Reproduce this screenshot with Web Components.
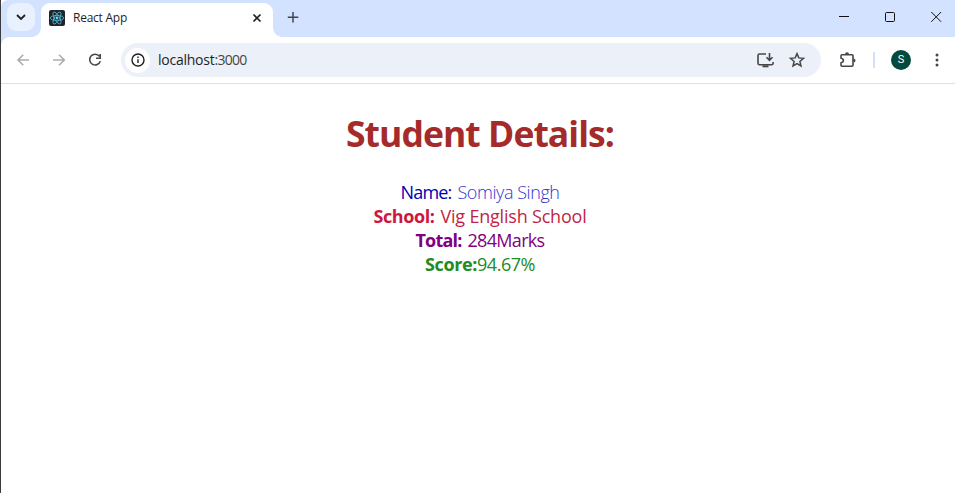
<!DOCTYPE html>
<html lang="en">
<head>
<meta charset="utf-8">
<title>React App</title>
<style>
html,body{margin:0;height:100%;overflow:hidden;background:#fff;font-family:"Open Sans","Noto Sans",sans-serif}
</style>
</head>
<body>
<browser-window>
  <tab-strip slot="tabs"></tab-strip>
  <tool-bar slot="toolbar"></tool-bar>
  <student-details></student-details>
</browser-window>
<script>
const define = (name, html, ready) => customElements.define(name, class extends HTMLElement {
  constructor() {
    super();
    const t = document.createElement('template');
    t.innerHTML = html.trim();
    this.attachShadow({ mode: 'open' }).append(t.content.cloneNode(true));
  }
  connectedCallback() { if (ready) ready(this); }
});

define('detail-row', `
<style>
:host{display:flex;height:24px;font-size:18px;line-height:24px}
::slotted([slot=label]){font-weight:700}
</style>
<slot name="label"></slot><slot></slot>`);

/* Inline text whose letter spacing is adjusted to fill the given width */
define('fit-text', `<style>:host{display:block;white-space:pre;flex:none}span{display:inline-block;vertical-align:top}</style><span><slot></slot></span>`, el => {
  const span = el.shadowRoot.querySelector('span');
  const w = +el.getAttribute('width');
  span.style.letterSpacing = '0px';
  const natural = span.getBoundingClientRect().width;
  span.style.letterSpacing = (w - natural) / el.textContent.length + 'px';
  el.style.width = w + 'px';
});

define('browser-window', `
<style>
:host{display:flex;flex-direction:column;height:100vh;box-sizing:border-box;border-left:1px solid #3c3c3f;background:#fff}
</style>
<slot name="tabs"></slot><slot name="toolbar"></slot><slot></slot>`);

define('tab-strip', `
<style>
:host{display:flex;height:37px;flex:none;background:#d3e2fe;color:#1f1f1f;border-radius:7px 0 0 0}
.search{width:28px;height:28px;margin:3px 6px 0;border-radius:9px;background:#e9f0fe;flex:none}
.tab{position:relative;display:flex;align-items:center;box-sizing:border-box;width:232px;height:34px;margin-top:3px;padding:0 8px 5px;border-radius:9px 9px 0 0;background:#fff;flex:none}
.tab::before,.tab::after{content:"";position:absolute;bottom:0;width:9px;height:9px}
.tab::before{right:100%;background:radial-gradient(circle at 0 0,transparent 8.5px,#fff 9px)}
.tab::after{left:100%;background:radial-gradient(circle at 100% 0,transparent 8.5px,#fff 9px)}
fit-text{font-size:12px;margin-left:8px;line-height:18px}
svg{display:block;flex:none}
.close{margin-left:auto}
.plus{margin:9px 0 0 12px}
.controls{display:flex;gap:30px;margin:9px 11px 0 auto}
</style>
<div class="search"><svg width="28" height="28" fill="none" stroke="#1f1f1f" stroke-width="1.8"><path d="M10 12l4 4 4-4"/></svg></div>
<div class="tab">
<svg width="16" height="16"><rect width="16" height="16" rx="2" fill="#20242b"/><g fill="none" stroke="#4fb6d1" stroke-width=".85"><ellipse cx="8" cy="8" rx="6.7" ry="2.6"/><ellipse cx="8" cy="8" rx="6.7" ry="2.6" transform="rotate(60 8 8)"/><ellipse cx="8" cy="8" rx="6.7" ry="2.6" transform="rotate(120 8 8)"/></g><circle cx="8" cy="8" r="1.4" fill="#61dafb"/></svg>
<fit-text width="54">React App</fit-text>
<svg class="close" width="16" height="16" stroke="#1f1f1f" stroke-width="1.7"><path d="M4.500 4.500l7 7m0-7l-7 7"/></svg>
</div>
<svg class="plus" width="16" height="16" stroke="#41454c" stroke-width="1.5"><path d="M8 3v10.500M2.800 8.200h10.500"/></svg>
<div class="controls">
<svg width="16" height="16" stroke="#111"><path d="M3 7.500h10"/></svg>
<svg width="16" height="16" stroke="#111" fill="none"><rect x="3.500" y="3.500" width="9" height="9" rx="1"/></svg>
<svg width="16" height="16" stroke="#111"><path d="M3.300 3l9.800 9.800m0-9.800l-9.800 9.800"/></svg>
</div>`);

define('tool-bar', `
<style>
:host{display:flex;align-items:center;height:46px;flex:none;border-bottom:1px solid #dfe0e2;background:#fff;color:#1f1f1f;padding-left:12px;position:relative}
:host::before{content:"";position:absolute;left:0;top:0;width:8px;height:8px;background:radial-gradient(circle at 100% 100%,transparent 7.5px,#d3e2fe 8px)}
svg{display:block;flex:none;fill:none;stroke:#474747;stroke-width:1.6}
.dim{stroke:#adadad}
.omni{display:flex;align-items:center;box-sizing:border-box;width:700px;height:34px;border-radius:17px;background:#ebf0f9;margin-left:17px;padding:0 13px 0 4px;flex:none}
.info{width:25px;height:25px;border-radius:50%;background:#fff;display:grid;place-items:center;flex:none}
.url{display:flex;margin:0 auto 0 8px;font-size:14px;line-height:20px}
.port{color:#474747}
.sep{width:2px;height:16px;background:#d3e0f5;margin:0 16px 0 17px}
.avatar{width:20px;height:20px;border-radius:50%;background:#03493d;color:#fff;font:11px/20px Roboto,sans-serif;text-align:center}
</style>
<svg class="dim" width="20" height="20"><path d="M16 10H5m5.300-5.300L5 10l5.300 5.300"/></svg>
<svg class="dim" style="margin-left:16px" width="20" height="20"><path d="M4 10h11.300m-5.300-5.300l5.300 5.300-5.300 5.300"/></svg>
<svg style="margin-left:17px" width="18" height="18"><path d="M13.400 5.300A5.400 5.400 0 1 0 14.300 10.100M14.200 3v4.200H10"/></svg>
<div class="omni">
<div class="info"><svg width="16" height="16" style="stroke:#1f1f1f;stroke-width:1.400"><circle cx="8" cy="8" r="6"/><path d="M8 7.200v3.900M8 4.600v1.500"/></svg></div>
<div class="url"><fit-text width="56.5">localhost</fit-text><fit-text class="port" width="32">:3000</fit-text></div>
<svg width="18" height="18"><path d="M10 3H3.600Q2 3 2 4.500v7.700q0 1.500 1.600 1.500h12q1.500 0 1.500-1.500V11M13.500 2v7M10.500 6.300l3 3 3-3"/><path d="M6.500 15.300h6" stroke-width="2"/></svg>
<svg style="margin-left:14px;margin-right:2px" width="18" height="18"><path d="M9 2.600l1.800 4.300 4.700.4-3.600 3.100 1.100 4.600L9 12.600 5 15l1.100-4.600-3.600-3.100 4.700-.4z" stroke-width="1.500"/></svg>
</div>
<svg style="margin-left:17px" width="18" height="18"><path d="M4 3.700h10q1 0 1 1v9.600q0 1-1 1H4q-1 0-1-1v-2.600q2.400-.5 2.400-2.200T3 7.300V4.700q0-1 1-1z" stroke-linejoin="round"/><path d="M7 3.300a2 2 0 0 1 4 0zM15.500 7.500a2 2 0 0 1 0 4z" fill="#474747" stroke="none"/></svg>
<div class="sep"></div>
<div class="avatar">S</div>
<svg style="margin-left:17px" width="18" height="18"><g fill="#474747" stroke="none"><circle cx="9" cy="4" r="1.500"/><circle cx="9" cy="9" r="1.500"/><circle cx="9" cy="14" r="1.500"/></g></svg>`);

define('student-details', `
<style>
:host{display:flex;flex-direction:column;align-items:center;padding:25px 0 0 4px}
h1{margin:0 0 23px;font-size:35.5px;line-height:48px;font-weight:700;color:#a52a2a}
</style>
<h1><fit-text width="268">Student Details:</fit-text></h1>
<detail-row style="color:#0000b8"><fit-text slot="label" style="font-weight:400" width="51">Name:</fit-text><fit-text style="font-weight:300;color:#3434cc;margin-left:6px" width="102">Somiya Singh</fit-text></detail-row>
<detail-row style="color:#cc1840"><fit-text slot="label" width="61">School:</fit-text><fit-text style="color:#c21f46;margin-left:6px" width="146">Vig English School</fit-text></detail-row>
<detail-row style="color:#800080"><fit-text slot="label" width="46">Total:</fit-text><fit-text style="margin-left:6px" width="77">284Marks</fit-text></detail-row>
<detail-row style="color:#228b22"><fit-text slot="label" width="52">Score:</fit-text><fit-text width="58">94.67%</fit-text></detail-row>`);
</script>
</body>
</html>
